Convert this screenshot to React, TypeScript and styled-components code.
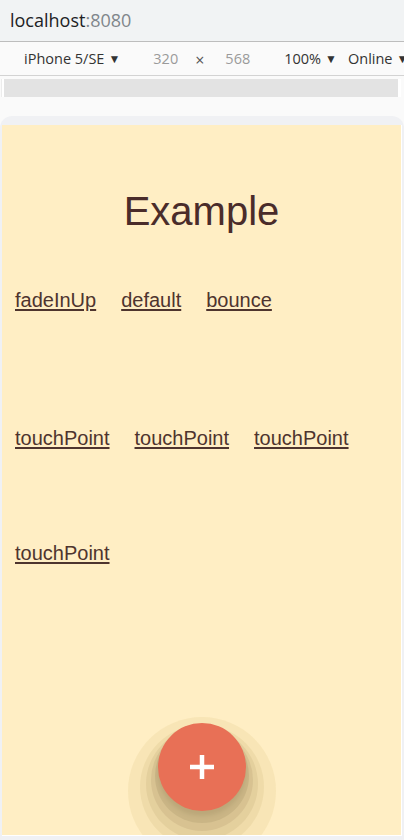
import React from "react";
import styled, { createGlobalStyle } from "styled-components";

const Global = createGlobalStyle`
  html, body { margin: 0; padding: 0; }
  body {
    width: 404px;
    height: 840px;
    overflow: hidden;
    background: #e9eaed;
    font-family: "Liberation Sans", Arial, sans-serif;
  }
`;

const Page = styled.div`
  width: 404px;
  height: 840px;
  display: flex;
  flex-direction: column;
  overflow: hidden;
`;

const AddressBar = styled.div`
  height: 42px;
  flex: none;
  background: #f1f3f4;
  display: flex;
  align-items: center;
  padding-left: 10px;
  font-family: "Open Sans", "Noto Sans", sans-serif;
  font-size: 18px;
  color: #202124;
  border-bottom: 1px solid #bdbdbd;
  box-sizing: border-box;
  padding-bottom: 2px;
`;

const Port = styled.span`
  color: #80868b;
`;

const DeviceToolbar = styled.div`
  height: 34px;
  flex: none;
  box-sizing: border-box;
  background: #fafafa;
  border-bottom: 1px solid #d3d3d3;
  display: flex;
  align-items: center;
  font-family: "Open Sans", "Noto Sans", sans-serif;
  font-size: 14.5px;
  color: #333;
  white-space: nowrap;
  overflow: hidden;
`;

const ToolItem = styled.span<{ $left: number; $muted?: boolean }>`
  flex: none;
  margin-left: ${(p) => p.$left}px;
  color: ${(p) => (p.$muted ? "#9a9a9a" : "#333")};
  display: inline-flex;
  align-items: center;
  gap: 4px;
`;

const Caret = styled.span`
  font-size: 12px;
  color: #333;
`;

const Times = styled.span<{ $left: number }>`
  flex: none;
  margin-left: ${(p) => p.$left}px;
  color: #555;
  font-size: 16px;
  padding-top: 3px;
`;

const RulerRow = styled.div`
  height: 22px;
  flex: none;
  background: #fafafa;
  display: flex;
  padding: 3px 3px 1px 1px;
  box-sizing: border-box;
`;

const RulerEdge = styled.div`
  width: 3px;
  background: #fff;
  border-left: 1px solid #ececec;
  box-sizing: border-box;
`;

const RulerBar = styled.div`
  flex: 1;
  background: #e3e3e3;
  border-right: 3px solid #fff;
`;

const Viewport = styled.div`
  flex: 1;
  background: #fafafa;
  padding-top: 18px;
  display: flex;
  flex-direction: column;
  min-height: 0;
`;

const Frame = styled.div`
  flex: 1;
  background: #f0f1f4;
  border-radius: 12px 12px 0 0;
  padding: 9px 2px 4px 2px;
  display: flex;
  flex-direction: column;
  min-height: 0;
`;

const Screen = styled.div`
  position: relative;
  flex: 1;
  background: #ffeec4;
  border-right: 1px solid #fff;
  border-bottom: 1px solid #fff;
  overflow: hidden;
  padding: 63px 0 0 13px;
  color: #4a2c2a;
`;

const Title = styled.h1`
  margin: 0 0 0 -13px;
  font-weight: normal;
  font-size: 40px;
  line-height: 46px;
  text-align: center;
  color: #4a2c2a;
`;

const LinkRow = styled.div<{ $top: number }>`
  display: flex;
  gap: 25px;
  margin-top: ${(p) => p.$top}px;
`;

const Link = styled.a`
  font-size: 20px;
  line-height: 23px;
  color: #4e342e;
  text-decoration: underline;
  text-underline-offset: 2px;
  cursor: pointer;
`;

const Fab = styled.button`
  position: absolute;
  left: 50%;
  bottom: 24px;
  width: 88px;
  height: 88px;
  margin-left: -44px;
  border: none;
  border-radius: 50%;
  background: #e87056;
  display: flex;
  align-items: center;
  justify-content: center;
  padding: 0;
  box-shadow:
    0 24px 0 30px rgba(225, 200, 130, 0.22),
    0 20px 0 18px rgba(200, 175, 120, 0.2),
    0 17px 0 12px rgba(170, 145, 100, 0.2),
    0 13px 0 7px rgba(130, 110, 80, 0.2),
    0 9px 0 3px rgba(100, 85, 60, 0.22),
    0 5px 4px 0 rgba(70, 55, 40, 0.25);
`;

export default function App() {
  return (
    <>
      <Global />
      <Page>
        <AddressBar>
          localhost<Port>:8080</Port>
        </AddressBar>
        <DeviceToolbar>
          <ToolItem $left={24}>
            iPhone 5/SE <Caret>▼</Caret>
          </ToolItem>
          <ToolItem $left={33} $muted>
            320
          </ToolItem>
          <Times $left={17}>×</Times>
          <ToolItem $left={21} $muted>
            568
          </ToolItem>
          <ToolItem $left={34}>
            100% <Caret>▼</Caret>
          </ToolItem>
          <ToolItem $left={11}>
            Online <Caret>▼</Caret>
          </ToolItem>
        </DeviceToolbar>
        <RulerRow>
          <RulerEdge />
          <RulerBar />
        </RulerRow>
        <Viewport>
          <Frame>
            <Screen>
              <Title>Example</Title>
              <LinkRow $top={55}>
                <Link>fadeInUp</Link>
                <Link>default</Link>
                <Link>bounce</Link>
              </LinkRow>
              <LinkRow $top={115}>
                <Link>touchPoint</Link>
                <Link>touchPoint</Link>
                <Link>touchPoint</Link>
              </LinkRow>
              <LinkRow $top={92}>
                <Link>touchPoint</Link>
              </LinkRow>
              <Fab aria-label="add">
                <svg width="28" height="28" viewBox="0 0 28 28">
                  <path d="M14 2 V26 M2 14 H26" stroke="#fff" strokeWidth="4.5" />
                </svg>
              </Fab>
            </Screen>
          </Frame>
        </Viewport>
      </Page>
    </>
  );
}
